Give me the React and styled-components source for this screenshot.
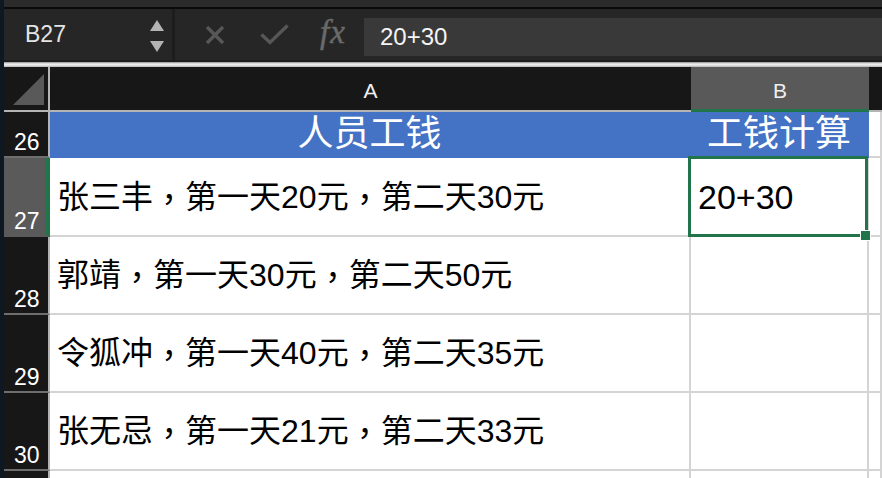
import React from 'react';
import styled, { createGlobalStyle } from 'styled-components';

const GlobalStyle = createGlobalStyle`
  html, body {
    margin: 0;
    padding: 0;
    background: #ffffff;
    overflow: hidden;
  }
  body {
    font-family: "Liberation Sans", "Noto Sans CJK SC", sans-serif;
  }
`;

const Window = styled.div`
  display: flex;
  width: 882px;
  height: 478px;
  overflow: hidden;
`;

const Edge = styled.div`
  width: 4px;
  flex-shrink: 0;
  background: #0d1822;
`;

const Main = styled.div`
  flex: 1;
  display: flex;
  flex-direction: column;
  min-width: 0;
  overflow: hidden;
`;

const TitleStrip = styled.div`
  height: 7px;
  flex-shrink: 0;
  background: #2b2b2b;
  border-bottom: 2px solid #0a0a0a;
`;

const FormulaBar = styled.div`
  height: 51px;
  flex-shrink: 0;
  display: flex;
  align-items: stretch;
  background: #262626;
  border-bottom: 2px solid #1c1c1c;
`;

const NameBox = styled.div`
  width: 168px;
  display: flex;
  align-items: center;
  justify-content: space-between;
  padding: 0 8px 0 21px;
  box-sizing: border-box;
  color: #e4e4e4;
  font-size: 23px;
  font-weight: 500;
`;

const Spinner = styled.div`
  display: flex;
  flex-direction: column;
  gap: 10px;
  margin-top: 2px;
`;

const BarDivider = styled.div`
  width: 3px;
  background: #1d1d1d;
`;

const Tools = styled.div`
  display: flex;
  align-items: center;
  gap: 35px;
  padding-left: 30px;
  width: 189px;
  box-sizing: border-box;
`;

const Fx = styled.span`
  font-family: "Liberation Serif", serif;
  font-style: italic;
  font-size: 33px;
  color: #6a6a6a;
  margin-left: -4px;
  margin-top: -4px;
  letter-spacing: 1px;
  -webkit-text-stroke: 0.5px #6a6a6a;
`;

const FormulaInput = styled.div`
  flex: 1;
  margin: 9px 0 4px;
  background: #393939;
  display: flex;
  align-items: center;
  padding-left: 16px;
  color: #f4f4f4;
  font-size: 24px;
`;

const Splitter = styled.div`
  height: 5px;
  flex-shrink: 0;
  background: linear-gradient(#8c8c8c 0, #d9d9d9 30%, #f0f0f0 55%, #b5b5b5 100%);
`;

const Sheet = styled.div`
  display: grid;
  grid-template-columns: 46px 641px 178px 1fr;
  align-content: start;
  flex-shrink: 0;
  background: #ffffff;
`;

const Corner = styled.div`
  height: 45px;
  background: #171717;
  border-right: 2px solid #b4b4b4;
  border-bottom: 2px solid #b4b4b4;
  box-sizing: border-box;
  display: flex;
  align-items: flex-end;
  justify-content: flex-end;
  padding: 0 4px 5px 0;
`;

const ColHead = styled.div`
  height: 45px;
  box-sizing: border-box;
  background: ${p => (p.$active ? '#595959' : '#171717')};
  border-bottom: ${p => (p.$active ? '3px solid #22744a' : '2px solid #b4b4b4')};
  display: flex;
  align-items: center;
  justify-content: center;
  padding-top: ${p => (p.$active ? '5px' : '4px')};
  color: #f0f0f0;
  font-size: 21px;
`;

const RowHead = styled.div`
  height: ${p => p.$h}px;
  box-sizing: border-box;
  background: ${p => (p.$active ? '#5a5a5a' : '#171717')};
  border-right: ${p => (p.$active ? '4px solid #22744a' : '2px solid #b4b4b4')};
  border-bottom: 2px solid ${p => (p.$active ? '#5a5a5a' : '#6e6e6e')};
  display: flex;
  align-items: flex-end;
  padding: 0 0 2px 10px;
  color: #ffffff;
  font-size: 23px;
  line-height: 1;
`;

const Cell = styled.div`
  position: relative;
  z-index: ${p => (p.$selected ? 2 : 'auto')};
  height: ${p => p.$h}px;
  box-sizing: border-box;
  background: ${p => (p.$banner ? '#4472c4' : '#ffffff')};
  border-right: 2px solid ${p => (p.$banner ? '#4472c4' : '#d4d4d4')};
  border-bottom: 2px solid ${p => (p.$banner ? '#4472c4' : '#d4d4d4')};
  display: flex;
  align-items: center;
  justify-content: ${p => (p.$banner ? 'center' : 'flex-start')};
  padding-left: ${p => (p.$banner ? '0' : '7px')};
  color: ${p => (p.$banner ? '#ffffff' : '#000000')};
  font-size: ${p => (p.$banner ? '36px' : p.$size || '32px')};
  line-height: 1;
  white-space: nowrap;
`;

/* full-width comma set centred in its box */
const Comma = styled.span`
  font-family: "Noto Sans CJK TC", "Noto Sans CJK SC", sans-serif;
`;

const Selection = styled.div`
  position: absolute;
  left: -3px;
  top: -2px;
  right: -1px;
  bottom: -2px;
  border: 3px solid #22744a;
  pointer-events: none;
`;

const FillHandle = styled.div`
  position: absolute;
  right: -6px;
  bottom: -7px;
  width: 9px;
  height: 9px;
  background: #22744a;
  border: 1px solid #ffffff;
`;

const Triangle = ({ up }) => (
  <svg width="14" height="11" viewBox="0 0 14 11">
    <polygon points={up ? '7,0 14,11 0,11' : '0,0 14,0 7,11'} fill="#b4b4b4" />
  </svg>
);

const CancelIcon = () => (
  <svg width="20" height="20" viewBox="0 0 20 20">
    <path d="M2 2 L18 18 M18 2 L2 18" stroke="#575757" strokeWidth="3.4" />
  </svg>
);

const EnterIcon = () => (
  <svg width="29" height="21" viewBox="0 0 29 21">
    <path d="M1.5 10.5 L10 18.5 L27.5 1.5" stroke="#575757" strokeWidth="3.4" fill="none" />
  </svg>
);

const CornerMark = () => (
  <svg width="31" height="31" viewBox="0 0 31 31">
    <polygon points="31,0 31,31 0,31" fill="#595959" />
  </svg>
);

const withCommas = text =>
  text.split('，').flatMap((part, i) =>
    i === 0 ? [part] : [<Comma key={i}>，</Comma>, part]
  );

const rows = [
  { n: 26, h: 46, a: '人员工钱', b: '工钱计算', banner: true },
  { n: 27, h: 79, a: '张三丰，第一天20元，第二天30元', b: '20+30', active: true },
  { n: 28, h: 78, a: '郭靖，第一天30元，第二天50元' },
  { n: 29, h: 78, a: '令狐冲，第一天40元，第二天35元' },
  { n: 30, h: 78, a: '张无忌，第一天21元，第二天33元' },
  { n: '', h: 78, a: '' },
];

export default function App() {
  return (
    <>
      <GlobalStyle />
      <Window>
        <Edge />
        <Main>
          <TitleStrip />
          <FormulaBar>
            <NameBox>
              <span>B27</span>
              <Spinner>
                <Triangle up />
                <Triangle />
              </Spinner>
            </NameBox>
            <BarDivider />
            <Tools>
              <CancelIcon />
              <EnterIcon />
              <Fx>fx</Fx>
            </Tools>
            <FormulaInput>20+30</FormulaInput>
          </FormulaBar>
          <Splitter />
          <Sheet>
            <Corner>
              <CornerMark />
            </Corner>
            <ColHead>A</ColHead>
            <ColHead $active>B</ColHead>
            <ColHead />
            {rows.map((r, i) => (
              <React.Fragment key={i}>
                <RowHead $h={r.h} $active={r.active}>{r.n}</RowHead>
                <Cell $h={r.h} $banner={r.banner}>{withCommas(r.a)}</Cell>
                <Cell $h={r.h} $banner={r.banner} $size="34px" $selected={r.active}>
                  {r.b}
                  {r.active && (
                    <Selection>
                      <FillHandle />
                    </Selection>
                  )}
                </Cell>
                <Cell $h={r.h} />
              </React.Fragment>
            ))}
          </Sheet>
        </Main>
      </Window>
    </>
  );
}
